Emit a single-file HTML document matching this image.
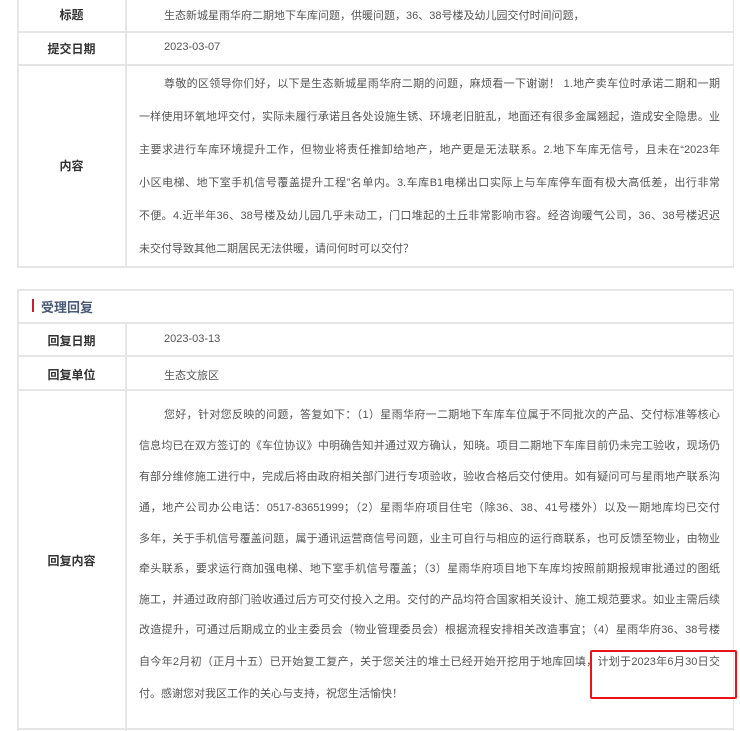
<!DOCTYPE html>
<html><head><meta charset="utf-8"><style>
*{margin:0;padding:0;box-sizing:border-box}
body{width:740px;height:731px;background:#fff;font-family:"Liberation Sans","Noto Sans CJK SC",sans-serif;font-size:12px;color:#555;position:relative;overflow:hidden}
.b{position:absolute;background:#e6e6e6}
.lab{position:absolute;left:18px;width:107px;text-align:center;font-weight:bold;color:#333;font-size:12px}
.t{position:absolute;left:139px;white-space:nowrap;font-size:11px}
.f{width:581px;text-align:justify;text-align-last:justify}
.i{padding-left:25px}
</style></head><body>
<!-- box 1 -->
<div class="b" style="left:17px;top:0;width:2px;height:268px"></div>
<div class="b" style="left:733px;top:0;width:1px;height:268px"></div>
<div class="b" style="left:125px;top:0;width:2px;height:268px"></div>
<div class="b" style="left:17px;top:31px;width:717px;height:2px"></div>
<div class="b" style="left:17px;top:64px;width:717px;height:2px"></div>
<div class="b" style="left:17px;top:266px;width:717px;height:2px"></div>
<div class="lab" style="top:6px">标题</div>
<div class="t i" style="top:7px">生态新城星雨华府二期地下车库问题，供暖问题，36、38号楼及幼儿园交付时间问题，</div>
<div class="lab" style="top:40px">提交日期</div>
<div class="t i" style="top:41px">2023-03-07</div>
<div class="lab" style="top:157px">内容</div>
<div class="t f i" style="top:75px">尊敬的区领导你们好，以下是生态新城星雨华府二期的问题，麻烦看一下谢谢！ 1.地产卖车位时承诺二期和一期</div>
<div class="t f" style="top:108px">一样使用环氧地坪交付，实际未履行承诺且各处设施生锈、环境老旧脏乱，地面还有很多金属翘起，造成安全隐患。业</div>
<div class="t f" style="top:141px">主要求进行车库环境提升工作，但物业将责任推卸给地产，地产更是无法联系。2.地下车库无信号，且未在“2023年</div>
<div class="t f" style="top:174px">小区电梯、地下室手机信号覆盖提升工程”名单内。3.车库B1电梯出口实际上与车库停车面有极大高低差，出行非常</div>
<div class="t f" style="top:207px">不便。4.近半年36、38号楼及幼儿园几乎未动工，门口堆起的土丘非常影响市容。经咨询暖气公司，36、38号楼迟迟</div>
<div class="t" style="top:240px">未交付导致其他二期居民无法供暖，请问何时可以交付？</div>
<!-- box 2 -->
<div class="b" style="left:17px;top:289px;width:2px;height:442px"></div>
<div class="b" style="left:733px;top:289px;width:1px;height:442px"></div>
<div class="b" style="left:17px;top:289px;width:717px;height:2px"></div>
<div class="b" style="left:17px;top:322px;width:717px;height:2px"></div>
<div class="b" style="left:125px;top:322px;width:2px;height:409px"></div>
<div class="b" style="left:17px;top:355px;width:717px;height:2px"></div>
<div class="b" style="left:17px;top:389px;width:717px;height:2px"></div>
<div class="b" style="left:17px;top:728px;width:717px;height:2px"></div>
<div style="position:absolute;left:32px;top:299px;width:2px;height:13px;background:#c81e2d"></div>
<div style="position:absolute;left:41px;top:297px;font-weight:bold;color:#4a5a78;font-size:13px">受理回复</div>
<div class="lab" style="top:332px">回复日期</div>
<div class="t i" style="top:333px">2023-03-13</div>
<div class="lab" style="top:366px">回复单位</div>
<div class="t i" style="top:367px">生态文旅区</div>
<div class="lab" style="top:552px">回复内容</div>
<div class="t f i" style="top:406px">您好，针对您反映的问题，答复如下：（1）星雨华府一二期地下车库车位属于不同批次的产品、交付标准等核心</div>
<div class="t f" style="top:437px">信息均已在双方签订的《车位协议》中明确告知并通过双方确认，知晓。项目二期地下车库目前仍未完工验收，现场仍</div>
<div class="t f" style="top:468px">有部分维修施工进行中，完成后将由政府相关部门进行专项验收，验收合格后交付使用。如有疑问可与星雨地产联系沟</div>
<div class="t f" style="top:499px">通，地产公司办公电话：0517-83651999；（2）星雨华府项目住宅（除36、38、41号楼外）以及一期地库均已交付</div>
<div class="t f" style="top:530px">多年，关于手机信号覆盖问题，属于通讯运营商信号问题，业主可自行与相应的运行商联系，也可反馈至物业，由物业</div>
<div class="t f" style="top:560px">牵头联系，要求运行商加强电梯、地下室手机信号覆盖；（3）星雨华府项目地下车库均按照前期报规审批通过的图纸</div>
<div class="t f" style="top:591px">施工，并通过政府部门验收通过后方可交付投入之用。交付的产品均符合国家相关设计、施工规范要求。如业主需后续</div>
<div class="t f" style="top:621px">改造提升，可通过后期成立的业主委员会（物业管理委员会）根据流程安排相关改造事宜；（4）星雨华府36、38号楼</div>
<div class="t f" style="top:653px">自今年2月初（正月十五）已开始复工复产，关于您关注的堆土已经开始开挖用于地库回填，计划于2023年6月30日交</div>
<div class="t" style="top:685px">付。感谢您对我区工作的关心与支持，祝您生活愉快！</div>
<div style="position:absolute;left:590px;top:650px;width:147px;height:49px;border:2px solid #e8141a;border-radius:2px"></div>
</body></html>
